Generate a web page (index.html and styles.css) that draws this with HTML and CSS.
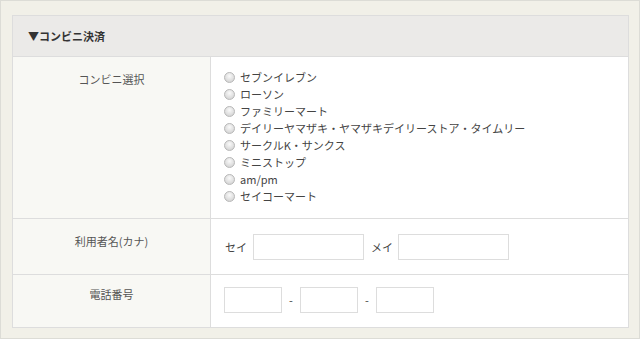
FILE: index.html
```html
<!DOCTYPE html>
<html>
  <head>
    <meta http-equiv="Content-Type" content="text/html; charset=UTF-8" />
    <title>コンビニ決済</title>
    <link rel="stylesheet" href="styles.css">
  </head>
  <body>
    <div class="panel">
      <table class="form-table">
        <tr>
          <th class="section-head" colspan="2">▼コンビニ決済</th>
        </tr>
        <tr class="row-store">
          <th class="label">コンビニ選択</th>
          <td class="value">
            <ul class="store-list">
              <li><label><input type="radio" name="store" class="radio" />セブンイレブン</label></li>
              <li><label><input type="radio" name="store" class="radio" />ローソン</label></li>
              <li><label><input type="radio" name="store" class="radio" />ファミリーマート</label></li>
              <li><label><input type="radio" name="store" class="radio" />デイリーヤマザキ・ヤマザキデイリーストア・タイムリー</label></li>
              <li><label><input type="radio" name="store" class="radio" />サークルK・サンクス</label></li>
              <li><label><input type="radio" name="store" class="radio" />ミニストップ</label></li>
              <li><label><input type="radio" name="store" class="radio" />am/pm</label></li>
              <li><label><input type="radio" name="store" class="radio" />セイコーマート</label></li>
            </ul>
          </td>
        </tr>
        <tr class="row-name">
          <th class="label">利用者名(カナ)</th>
          <td class="value">
            <div class="field-line">
              <span class="kana-label sei">セイ</span>
              <input type="text" class="text-input name-input" />
              <span class="kana-label mei">メイ</span>
              <input type="text" class="text-input name-input" />
            </div>
          </td>
        </tr>
        <tr class="row-tel">
          <th class="label">電話番号</th>
          <td class="value">
            <div class="field-line">
              <input type="text" class="text-input tel-input" />
              <span class="dash">-</span>
              <input type="text" class="text-input tel-input" />
              <span class="dash">-</span>
              <input type="text" class="text-input tel-input" />
            </div>
          </td>
        </tr>
      </table>
    </div>
  </body>
</html>
```

FILE: styles.css
```css
body {
  margin: 0;
  padding: 0;
  font-family: 'Noto Sans CJK JP', 'Liberation Sans', sans-serif;
  font-size: 11px;
  color: #444444;
  background-color: #ffffff;
}
.panel {
  width: 617px;
  height: 312px;
  padding: 14px 10px 11px 11px;
  background-color: #f1f0e8;
  border: 1px solid #dcdcd6;
}
.form-table {
  width: 617px;
  border-collapse: collapse;
  background-color: #ffffff;
}
.form-table th,
.form-table td {
  border: 1px solid #dddddd;
}
.section-head {
  height: 40px;
  padding: 0 0 0 15px;
  text-align: left;
  font-size: 11px;
  font-weight: bold;
  color: #333333;
  background-color: #ebeae8;
}
.label {
  width: 197px;
  padding: 14px 0 0 0;
  vertical-align: top;
  text-align: center;
  font-weight: normal;
  line-height: 17px;
  color: #555555;
  background-color: #f8f8f4;
}
.row-tel .label {
  padding-top: 11px;
}
.value {
  padding: 0 0 0 13px;
  vertical-align: top;
  background-color: #ffffff;
}
.row-store .value {
  padding-top: 12px;
  padding-bottom: 13px;
}
.row-name .value {
  padding-top: 15px;
  padding-bottom: 14px;
}
.row-tel .value {
  padding-top: 12px;
  padding-bottom: 14px;
}
.store-list {
  list-style: none;
  margin: 0;
  padding: 0;
}
.store-list li {
  height: 17px;
  line-height: 17px;
}
.store-list label {
  display: flex;
  align-items: center;
  gap: 5px;
}
.radio {
  appearance: none;
  -webkit-appearance: none;
  flex: none;
  width: 11px;
  height: 11px;
  margin: 0;
  border: 1px solid #b9b9b9;
  border-radius: 50%;
  background: radial-gradient(circle at 50% 35%, #fafafa 0%, #dedede 60%, #cacaca 100%);
}
.field-line {
  display: flex;
  align-items: center;
  height: 26px;
}
.kana-label.sei {
  margin: 0 6px 0 1px;
}
.kana-label.mei {
  margin: 0 5px 0 7px;
}
.text-input {
  box-sizing: border-box;
  height: 26px;
  border: 1px solid #dddddd;
  background-color: #ffffff;
  margin: 0;
  padding: 0 4px;
}
.name-input {
  width: 111px;
}
.tel-input {
  width: 58px;
}
.dash {
  width: 4px;
  margin: 0 7px;
  text-align: center;
}
```
